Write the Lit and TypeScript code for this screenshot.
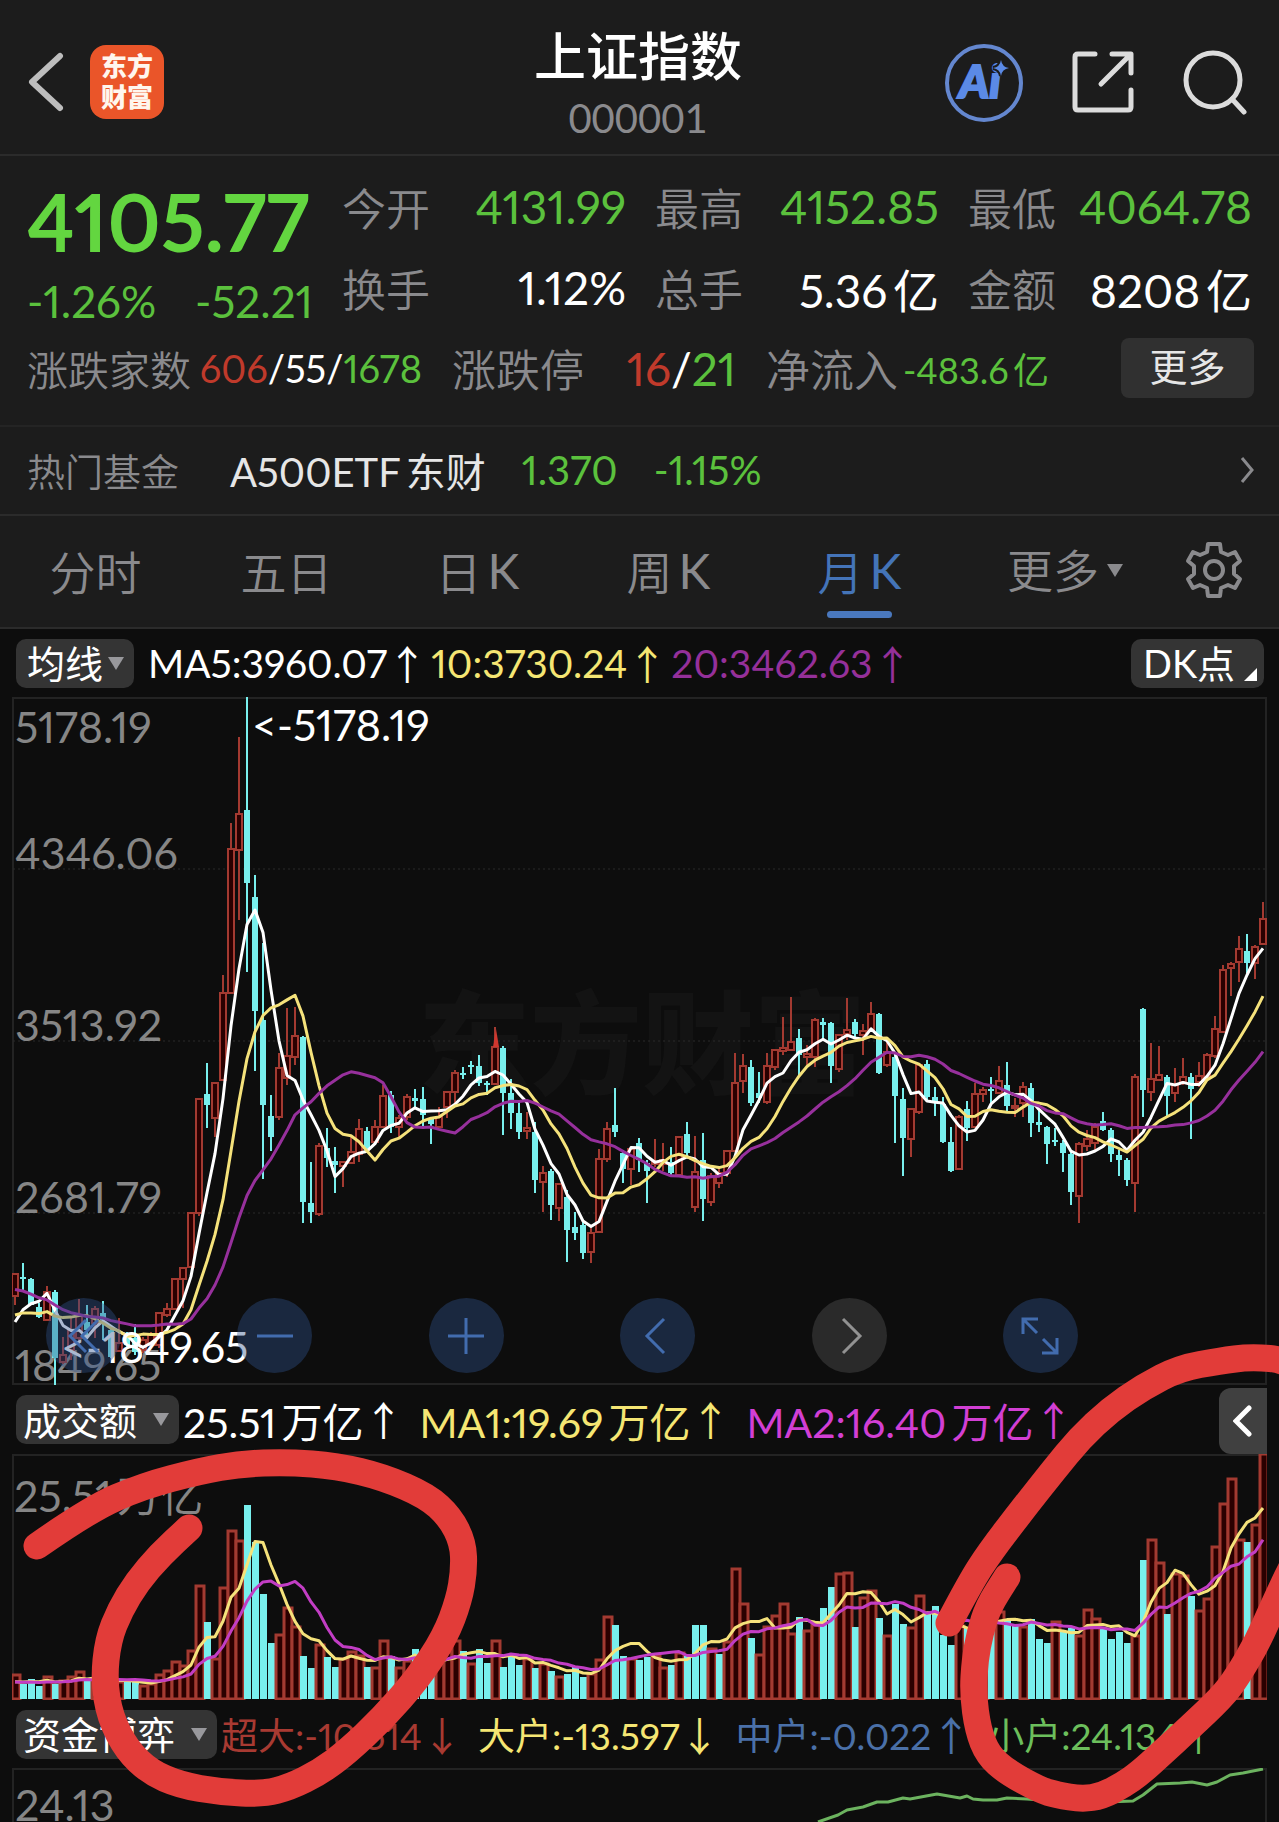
import { LitElement, html, svg, css } from "lit";
import { customElement, property } from "lit/decorators.js";
import { classMap } from "lit/directives/class-map.js";

/* Monthly candles as [direction, high, body top, body bottom, low], in plot units. */
type Candle = [number, number, number, number, number];
const U = 1;
const D = 0;
const CANDLES: Candle[] = [
  [U,1274,1274,1296,1305],[D,1263,1277,1279,1292],[D,1278,1279,1305,1305],[D,1303,1307,1317,1318],
  [U,1286,1292,1320,1321],[D,1290,1292,1358,1386],[U,1337,1355,1362,1364],[U,1318,1330,1350,1360],
  [U,1299,1315,1338,1345],[D,1305,1322,1330,1338],[U,1306,1309,1323,1338],[D,1301,1313,1320,1340],
  [D,1325,1330,1357,1358],[U,1318,1343,1351,1352],[D,1332,1338,1345,1348],[D,1324,1338,1352,1355],
  [U,1337,1340,1350,1353],[U,1332,1335,1345,1347],[U,1312,1313,1345,1348],[U,1303,1309,1315,1317],
  [U,1278,1279,1309,1310],[U,1267,1268,1279,1308],[U,1212,1213,1267,1267],[U,1098,1099,1213,1216],
  [D,1063,1094,1105,1128],[U,1082,1083,1118,1137],[U,975,993,1080,1081],[U,823,849,993,994],
  [U,737,814,850,920],[D,697,810,883,972],[D,875,897,1011,1071],[D,943,1020,1105,1179],
  [D,1095,1116,1137,1151],[U,1053,1068,1117,1120],[U,1008,1056,1078,1085],[U,1007,1036,1057,1065],
  [D,1036,1037,1202,1223],[D,1162,1203,1212,1223],[U,1143,1146,1214,1216],[D,1128,1148,1158,1167],
  [D,1147,1161,1165,1193],[U,1161,1162,1166,1187],[U,1137,1152,1163,1164],[U,1119,1129,1154,1162],
  [D,1127,1131,1148,1150],[U,1120,1127,1142,1145],[U,1085,1096,1127,1128],[D,1091,1095,1127,1133],
  [U,1115,1118,1127,1138],[U,1094,1097,1117,1120],[D,1089,1098,1101,1107],[D,1087,1099,1115,1127],
  [D,1117,1119,1124,1144],[U,1107,1117,1127,1128],[U,1091,1092,1107,1118],[U,1070,1073,1092,1103],
  [D,1067,1073,1075,1079],[D,1061,1065,1067,1074],[D,1055,1066,1083,1086],[D,1081,1083,1085,1095],
  [U,1027,1047,1084,1085],[D,1046,1048,1093,1135],[D,1079,1093,1113,1129],[D,1100,1113,1132,1139],
  [U,1112,1128,1131,1139],[D,1122,1132,1180,1193],[U,1166,1173,1182,1212],[D,1169,1171,1205,1220],
  [U,1183,1184,1208,1221],[D,1190,1197,1230,1262],[D,1212,1227,1233,1240],[D,1220,1225,1253,1259],
  [U,1228,1233,1252,1263],[U,1149,1159,1232,1232],[U,1122,1129,1159,1162],[D,1088,1125,1132,1137],
  [D,1150,1153,1169,1183],[U,1147,1149,1169,1185],[D,1138,1143,1160,1172],[D,1160,1163,1171,1203],
  [U,1139,1162,1164,1167],[U,1143,1160,1164,1171],[D,1147,1162,1173,1176],[U,1137,1137,1175,1177],
  [D,1122,1134,1153,1158],[U,1136,1172,1207,1212],[D,1133,1160,1199,1221],[U,1173,1176,1202,1206],
  [U,1167,1173,1183,1188],[U,1150,1151,1173,1177],[U,1053,1083,1151,1152],[U,1054,1066,1081,1093],
  [D,1060,1067,1103,1106],[D,1072,1093,1098,1103],[U,1053,1066,1102,1104],[U,1049,1050,1067,1070],
  [U,1017,1048,1051,1055],[U,997,1042,1050,1051],[D,1029,1038,1055,1075],[U,1045,1054,1057,1065],
  [U,1018,1020,1057,1067],[D,1018,1022,1025,1040],[D,1022,1023,1066,1083],[U,1034,1035,1069,1072],
  [U,998,1030,1034,1040],[D,1019,1022,1034,1037],[U,1024,1031,1035,1055],[U,1002,1014,1031,1032],
  [D,1013,1014,1073,1074],[U,1040,1052,1065,1067],[D,1053,1057,1096,1143],[D,1088,1099,1138,1176],
  [U,1108,1109,1139,1157],[U,1063,1065,1112,1114],[D,1060,1064,1097,1102],[D,1087,1097,1102,1116],
  [D,1097,1104,1142,1143],[D,1127,1142,1171,1172],[U,1115,1117,1169,1170],[D,1101,1109,1128,1141],
  [U,1083,1094,1127,1128],[U,1087,1090,1094,1102],[D,1077,1089,1091,1103],[U,1066,1081,1093,1093],
  [D,1062,1085,1106,1111],[U,1098,1106,1108,1117],[U,1082,1087,1103,1117],[D,1083,1088,1123,1137],
  [D,1110,1122,1125,1132],[D,1126,1127,1144,1164],[D,1128,1140,1142,1146],[D,1140,1143,1153,1172],
  [D,1152,1154,1192,1205],[U,1142,1144,1196,1223],[U,1130,1139,1146,1151],[U,1123,1127,1143,1150],
  [D,1112,1121,1130,1131],[D,1128,1130,1154,1162],[D,1150,1155,1160,1176],[D,1158,1160,1180,1186],
  [U,1074,1077,1183,1212],[D,1008,1009,1090,1117],[U,1043,1079,1092,1101],[U,1046,1075,1080,1081],
  [D,1075,1077,1096,1116],[U,1068,1085,1093,1102],[U,1058,1077,1082,1085],[D,1073,1077,1089,1139],
  [U,1062,1076,1082,1087],[U,1053,1055,1077,1077],[U,1016,1029,1056,1058],[U,965,970,1032,1033],
  [U,962,964,968,996],[U,936,949,962,982],[D,934,951,963,973],[U,945,947,963,979],[U,902,919,944,944],
];

/* Closes of the months before the first visible candle, needed by the averages. */
const EARLIER_CLOSES = [
  1250,1240,1245,1250,1255,1262,1270,1278,1290,1300,1300,1305,1310,1312,1313,1340,1335,1330,1331,
];

/* Turnover bars; a negative value is a falling month. */
const TURNOVER = [
  24,-15,-20,-13,22,-15,18,22,27,-18,20,-18,-19,17,-18,-17,13,15,24,28,37,33,48,113,-77,40,111,168,158,
  -194,-157,-105,-56,64,91,72,-43,-31,54,-42,-32,40,47,43,-32,31,58,-43,31,38,-50,-30,-27,43,47,58,-48,
  35,-50,-36,58,-32,-43,-34,40,-31,35,-28,22,-25,-33,-22,25,39,82,-74,-43,40,-39,-42,43,31,-34,46,-43,
  -74,-74,50,-45,57,130,95,-61,44,72,83,95,65,-82,68,74,-91,-112,125,126,-72,101,108,-81,63,-95,-75,71,
  103,-87,-93,-64,-54,73,-72,73,80,-77,87,-80,-75,72,-80,-60,-56,77,-67,-71,63,89,80,-70,-60,-67,-56,63,
  -139,159,136,-85,125,123,-103,88,100,152,195,220,159,-157,174,245,
];

const MONEY_FLOW = [
  [818,1822],[838,1815],[847,1810],[863,1807],[877,1802],[888,1802],[903,1798],[910,1799],[937,1794],
  [960,1798],[967,1796],[973,1799],[983,1800],[997,1800],[1007,1798],[1027,1799],[1080,1803],[1133,1801],
  [1143,1795],[1157,1784],[1180,1783],[1192,1782],[1207,1785],[1217,1782],[1230,1775],[1243,1773],[1263,1769],
];

const SCRIBBLES = [
  [[37,1546],[90,1509],[143,1486],[200,1471],[240,1464],[287,1462],[337,1466],[383,1477],[427,1496],
   [450,1517],[463,1543],[464,1570],[459,1600],[445,1637],[418,1678],[383,1718],[347,1752],[320,1772],
   [290,1787],[263,1794],[220,1792],[180,1785],[150,1772],[127,1750],[110,1717],[104,1680],[108,1640],
   [120,1610],[137,1582],[160,1555],[189,1528]],
  [[949,1623],[970,1583],[990,1552],[1023,1509],[1053,1471],[1080,1438],[1110,1410],[1143,1387],
   [1180,1368],[1220,1361],[1250,1357],[1290,1360],[1330,1400],[1330,1500],[1295,1560],[1273,1607],
   [1257,1643],[1237,1677],[1222,1697],[1187,1730],[1162,1753],[1140,1773],[1123,1785],[1102,1796],
   [1082,1799],[1057,1795],[1040,1790],[1007,1772],[988,1755],[978,1730],[973,1693],[975,1660],
   [980,1633],[988,1607],[1007,1577]],
];

const STEP = 8;
const FIRST_X = 15;
const xAt = (i: number) => FIRST_X + i * STEP;

function movingAverage(values: number[], count: number, period: number): number[] {
  const offset = values.length - count;
  return Array.from({ length: count }, (_, i) => {
    const end = offset + i + 1;
    const part = values.slice(Math.max(0, end - period), end);
    return part.reduce((a, b) => a + b, 0) / part.length;
  });
}

const points = (ys: number[]) => ys.map((y, i) => `${xAt(i)},${y.toFixed(1)}`).join(" ");

function smoothPath(p: number[][]): string {
  let d = `M${p[0][0]} ${p[0][1]}`;
  for (let i = 1; i < p.length - 1; i++) {
    const mx = (p[i][0] + p[i + 1][0]) / 2;
    const my = (p[i][1] + p[i + 1][1]) / 2;
    d += `Q${p[i][0]} ${p[i][1]} ${mx} ${my}`;
  }
  const last = p[p.length - 1];
  return d + `L${last[0]} ${last[1]}`;
}

const base = css`
  * { box-sizing: border-box; }
  button, select, a { font: inherit; color: inherit; margin: 0; padding: 0; border: 0; background: none; text-decoration: none; }
  button, select { appearance: none; cursor: pointer; }
  svg { display: block; }
`;

@customElement("quote-header")
class QuoteHeader extends LitElement {
  static styles = [base, css`
    :host { display: block; background: #1c1c1c; border-bottom: 2px solid #2b2b2b; }
    .bar { display: grid; grid-template-columns: 1fr auto 1fr; align-items: center; height: 154px; padding: 10px 31px 0 28px; }
    .side { display: flex; align-items: center; gap: 26px; }
    .end { justify-content: flex-end; gap: 49px; }
    .logo { display: grid; place-content: center; width: 74px; height: 74px; border-radius: 16px; background: #ea5529; color: #fff6ee; font-size: 26px; line-height: 31px; font-weight: 900; text-align: center; }
    .title { text-align: center; padding-top: 12px; }
    h1 { margin: 0; font-size: 52px; line-height: 60px; font-weight: 500; color: #fff; }
    p { margin: 0; font-size: 40px; line-height: 64px; color: #8a8a8d; font-variant-numeric: tabular-nums; }
    .ai { font-weight: 900; font-style: italic; font-size: 46px; fill: #5b8ae6; stroke: #5b8ae6; stroke-width: 2; }
  `];
  render() {
    return html`<header class="bar">
      <div class="side">
        <button aria-label="返回"><svg width="36" height="60" viewBox="0 0 36 60" fill="none" stroke="#bdbdbd" stroke-width="6" stroke-linecap="round" stroke-linejoin="round"><path d="M32 4 4 30 32 56"/></svg></button>
        <a class="logo" href="#home">东方<br>财富</a>
      </div>
      <div class="title"><h1>上证指数</h1><p>000001</p></div>
      <div class="side end">
        <button aria-label="智能助手"><svg width="79" height="79" viewBox="0 0 79 79">
          <circle cx="40" cy="40" r="37" fill="none" stroke="#6487cf" stroke-width="4"/>
          <text class="ai" x="15" y="55">Ai</text>
          <path d="M57 17Q58 24 65 25 58 26 57 33 56 26 49 25 56 24 57 17Z" fill="#5b8ae6" stroke="#1c1c1c" stroke-width="4" paint-order="stroke"/>
        </svg></button>
        <button aria-label="分享"><svg width="62" height="62" viewBox="0 0 62 62" fill="none" stroke="#dcdcdc" stroke-width="5" stroke-linecap="round" stroke-linejoin="round"><path d="M23 3H6Q3 3 3 6V56Q3 59 6 59H56Q59 59 59 56V39M40 3H59V22M58 4 29 33"/></svg></button>
        <button aria-label="搜索"><svg width="65" height="65" viewBox="0 0 65 65" fill="none" stroke="#dcdcdc" stroke-width="5" stroke-linecap="round"><circle cx="30" cy="30" r="27"/><path d="M49 49 61 62"/></svg></button>
      </div>
    </header>`;
  }
}

@customElement("quote-summary")
class QuoteSummary extends LitElement {
  static styles = [base, css`
    :host { display: block; background: #1c1c1c; color: #fff; }
    .quote { display: grid; grid-template-columns: 286px repeat(3, 1fr); column-gap: 29px; grid-template-rows: 81px 81px; padding: 10px 27px 0; }
    .price { grid-row: 1 / 3; color: #63d640; padding-top: 5px; }
    .last { font-size: 80px; line-height: 100px; font-weight: 700; }
    .change { display: flex; justify-content: space-between; font-size: 44px; line-height: 60px; color: #5bc13d; }
    .cell { display: flex; justify-content: space-between; align-items: center; font-size: 46px; white-space: nowrap; }
    .label { color: #8a8a8d; font-size: 44px; font-weight: 350; }
    .up { color: #c03a2b; }
    .down { color: #5bc13d; }
    .more-row { display: grid; grid-template-columns: 395px 284px 283px 1fr; column-gap: 30px; align-items: center; height: 80px; padding: 0 25px 0 27px; margin-bottom: 17px; }
    .small { font-size: 38px; }
    .small .label { font-size: 41px; }
    .flow { font-size: 36px; }
    .more { justify-self: end; width: 133px; height: 60px; border-radius: 8px; background: #303030; color: #e6e6e6; font-size: 38px; line-height: 56px; padding-bottom: 4px; }
    .fund { display: flex; align-items: center; height: 91px; padding: 0 25px 2px 27px; border-top: 2px solid #242424; border-bottom: 2px solid #2b2b2b; font-size: 40px; color: #e6e6e6; }
    .fund .label { font-size: 38px; margin-right: 51px; }
    .fund .down { margin-left: 36px; }
    .fund svg { margin-left: auto; }
  `];
  private cells: [string, string, boolean][] = [
    ["今开", "4131.99", true], ["最高", "4152.85", true], ["最低", "4064.78", true],
    ["换手", "1.12%", false], ["总手", "5.36亿", false], ["金额", "8208亿", false],
  ];
  render() {
    return html`
      <section class="quote">
        <div class="price">
          <div class="last">4105.77</div>
          <div class="change"><span>-1.26%</span><span>-52.21</span></div>
        </div>
        ${this.cells.map(([label, value, down]) => html`<div class="cell"><span class="label">${label}</span><span class=${classMap({ down })}>${value}</span></div>`)}
      </section>
      <section class="more-row">
        <div class="cell small"><span class="label">涨跌家数</span><span><span class="up">606</span>/55/<span class="down">1678</span></span></div>
        <div class="cell"><span class="label">涨跌停</span><span><span class="up">16</span>/<span class="down">21</span></span></div>
        <div class="cell flow"><span class="label">净流入</span><span class="down">-483.6亿</span></div>
        <button class="more">更多</button>
      </section>
      <a class="fund" href="#fund">
        <span class="label">热门基金</span><span>A500ETF东财</span><span class="down">1.370</span><span class="down">-1.15%</span>
        <svg width="14" height="28" viewBox="0 0 14 28" fill="none" stroke="#8a8a8d" stroke-width="3"><path d="M2 2 12 14 2 26"/></svg>
      </a>`;
  }
}

@customElement("period-tabs")
class PeriodTabs extends LitElement {
  static styles = [base, css`
    :host { display: block; background: #1c1c1c; border-bottom: 2px solid #2b2b2b; color: #8a8a8d; }
    nav { display: grid; grid-template-columns: repeat(5, 191fr) 220fr 78fr; height: 111px; padding-right: 26px; align-items: stretch; }
    button, label { display: flex; align-items: center; justify-content: center; font-size: 46px; font-weight: 350; position: relative; white-space: nowrap; padding-bottom: 3px; }
    label { gap: 8px; }
    .active { color: #4474b8; }
    .active::after { content: ""; position: absolute; bottom: 9px; width: 65px; height: 7px; border-radius: 4px; background: #4a78bd; }
    .latin { font-weight: 400; font-size: 48px; margin-left: 6px; }
  `];
  @property() active = "月K";
  render() {
    return html`<nav>
      ${["分时", "五日", "日K", "周K", "月K"].map((t) => html`<button class=${classMap({ active: t === this.active })}>${t.replace("K", "")}${t.endsWith("K") ? html`<span class="latin">K</span>` : ""}</button>`)}
      <label><select aria-label="更多周期"><option>更多</option></select><svg width="16" height="13" viewBox="0 0 16 13" fill="#8a8a8d"><path d="M0 0H16L8 13Z"/></svg></label>
      <button aria-label="设置"><svg width="58" height="58" viewBox="-29 -29 58 58" fill="none" stroke="#8a8a8d" stroke-width="4" stroke-linejoin="round"><path d="M-6-26H6L7-18 14-15 21-18 26-9 20-4V4L26 9 21 18 14 15 7 18 6 26H-6L-7 18-14 15-21 18-26 9-20 4V-4L-26-9-21-18-14-15-7-18Z"/><circle r="9"/></svg></button>
    </nav>`;
  }
}

@customElement("chart-panel")
class ChartPanel extends LitElement {
  static styles = [base, css`
    :host { display: block; position: relative; overflow: hidden; background: #0d0d0d; color: #fff; }
    .legend { display: flex; align-items: center; height: 68px; padding: 0 15px 0 16px; font-size: 39px; white-space: nowrap; }
    .volume { height: 69px; gap: 4px; font-size: 41px; }
    .flow { font-size: 37px; gap: 4px; }
    .chip { display: flex; align-items: center; gap: 4px; height: 49px; padding: 0 10px 0 11px; border-radius: 10px; background: #343434; font-size: 38px; color: #fff; }
    .wide { gap: 15px; padding: 0 10px 0 7px; }
    .corner { margin-left: auto; gap: 8px; padding: 0 7px 0 12px; }
    .corner svg { align-self: flex-end; margin-bottom: 7px; }
    .value { display: flex; align-items: center; }
    .averages { display: flex; margin-left: 14px; gap: 4px; }
    .turnover, .orders { display: flex; gap: 16px; }
    .arrow { font-family: "Noto Sans CJK SC", sans-serif; font-size: 40px; line-height: 49px; }
    .white { color: #fff; }
    .yellow { color: #f5e673; }
    .purple { color: #95309a; }
    .magenta { color: #d23fd4; }
    .red { color: #a83a32; }
    .blue { color: #4a70a8; }
    .green { color: #6cbf5c; }
    .plot { position: relative; margin: 0 12px; }
    .plot > svg { width: 100%; height: auto; }
    .tools { position: absolute; left: 0; right: 0; bottom: 12px; display: flex; justify-content: space-between; padding: 0 189px 0 34px; }
    .tools button { display: grid; place-items: center; width: 75px; height: 75px; border-radius: 50%; background: rgba(48, 83, 140, 0.4); color: #426cae; }
    .tools .off { background: #2a2a2a; color: #929292; }
    .tools svg { fill: none; stroke: currentColor; stroke-width: 3; }
    .handle { position: absolute; right: 0; bottom: 100%; display: grid; place-items: center; width: 48px; height: 66px; border-radius: 12px 0 0 12px; background: #404040; }
    .scribble { position: absolute; inset: 0; width: 100%; height: auto; fill: none; stroke: #e23c39; stroke-width: 27; stroke-linecap: round; stroke-linejoin: round; pointer-events: none; }
    .frame { fill: none; stroke: #232323; stroke-width: 2; }
    .grid { stroke: #2a2a2a; stroke-width: 1; stroke-dasharray: 2 3; }
    .axis { fill: #868686; font-size: 43px; }
    .note { fill: #fff; font-size: 43px; }
    .mark { fill: #131313; font-size: 112px; font-weight: 900; }
    .cu { fill: #2a0000; stroke: #a33a31; stroke-width: 2; }
    .bar { stroke-width: 3; }
    .cd { fill: #78efed; stroke: none; }
    .line { fill: none; stroke-width: 3; stroke-linejoin: round; }
    .l1 { stroke: #fff; }
    .l2 { stroke: #f5e27b; }
    .l3 { stroke: #97309c; }
    .l4 { stroke: #c23dc4; }
    .l5 { stroke: #6cb35f; }
  `];

  private value(cls: string, text: string, arrow: string) {
    return html`<span class="value ${cls}">${text}<span class="arrow">${arrow}</span></span>`;
  }

  private chip(text: string, label: string, wide = false) {
    return html`<label class=${classMap({ chip: true, wide })}><select aria-label=${label}><option>${text}</option></select><svg width="16" height="13" viewBox="0 0 16 13" fill="#98989c"><path d="M0 0H16L8 13Z"/></svg></label>`;
  }

  private candle([up, high, top, bottom, low]: Candle, i: number) {
    const x = xAt(i);
    if (up) {
      return svg`<g class="cu"><path d="M${x} ${high}V${top}M${x} ${bottom}V${low}"/><rect x=${x - 3} y=${top} width="6" height=${Math.max(1, bottom - top)}/></g>`;
    }
    return svg`<g class="cd"><rect x=${x - 1} y=${high} width="2" height=${low - high}/><rect x=${x - 3} y=${top} width="6" height=${Math.max(2, bottom - top)}/></g>`;
  }

  private bar(v: number, i: number) {
    const x = xAt(i);
    return v > 0
      ? svg`<rect class="cu bar" x=${x - 3} y=${1699 - v} width="8" height=${v}/>`
      : svg`<rect class="cd" x=${x - 3} y=${1699 + v} width="7" height=${-v}/>`;
  }

  render() {
    const n = CANDLES.length;
    const closes = [...EARLIER_CLOSES, ...CANDLES.map((c) => (c[0] ? c[2] : c[3]))];
    const tops = [19, 18, 17, 16, 15, 16, 17, 15, 14, ...TURNOVER.map(Math.abs)].map((v) => 1699 - v);
    return html`
      <div class="legend">
        ${this.chip("均线", "主图指标")}
        <div class="averages">
          ${this.value("white", "MA5:3960.07", "↑")}${this.value("yellow", "10:3730.24", "↑")}${this.value("purple", "20:3462.63", "↑")}
        </div>
        <label class="chip corner"><select aria-label="买卖点"><option>DK点</option></select><svg width="13" height="13" viewBox="0 0 13 13" fill="#fff"><path d="M13 0V13H0Z"/></svg></label>
      </div>

      <div class="plot">
        <svg viewBox="12 697 1255 688" role="img" aria-label="月K线">
          <rect class="frame" x="13" y="698" width="1253" height="686"/>
          <text class="mark" x="418" y="1086">东方财富</text>
          ${[869, 1041, 1213].map((y) => svg`<path class="grid" d="M13 ${y}H1266"/>`)}
          ${[["5178.19", 743], ["4346.06", 869], ["3513.92", 1041], ["2681.79", 1213], ["1849.65", 1381]].map(([t, y]) => svg`<text class="axis" x="15" y=${y}>${t}</text>`)}
          ${CANDLES.map((c, i) => this.candle(c, i))}
          <path d="M493 1047 496 1029 499 1047Z" fill="#d0372f"/>
          <polyline class="line l1" points=${points(movingAverage(closes, n, 5))}/>
          <polyline class="line l2" points=${points(movingAverage(closes, n, 10))}/>
          <polyline class="line l3" points=${points(movingAverage(closes, n, 20))}/>
          <text class="note" x="252" y="741">&lt;-5178.19</text>
          <text class="note" x="61" y="1363">&lt;-1849.65</text>
        </svg>
        <div class="tools">
          <button aria-label="最早"><svg width="40" height="40"><path d="M22 4 6 20 22 36M34 4 18 20 34 36"/></svg></button>
          <button aria-label="缩小"><svg width="40" height="40"><path d="M2 20H38"/></svg></button>
          <button aria-label="放大"><svg width="40" height="40"><path d="M2 20H38M20 2V38"/></svg></button>
          <button aria-label="向左"><svg width="40" height="40"><path d="M26 3 9 20 26 37"/></svg></button>
          <button class="off" aria-label="向右"><svg width="40" height="40"><path d="M14 3 31 20 14 37"/></svg></button>
          <button aria-label="全屏"><svg width="40" height="40"><path d="M3 18V3H18M4 4 17 17M37 22V37H22M36 36 23 23"/></svg></button>
        </div>
      </div>

      <div class="legend volume">
        ${this.chip("成交额", "副图指标一", true)}
        <div class="turnover">
          ${this.value("white", "25.51万亿", "↑")}${this.value("yellow", "MA1:19.69万亿", "↑")}${this.value("magenta", "MA2:16.40万亿", "↑")}
        </div>
      </div>
      <div class="plot">
        <svg viewBox="12 1454 1255 246" role="img" aria-label="成交额">
          <path class="frame" d="M13 1700V1455H1266V1700"/>
          <text class="axis" x="14" y="1512">25.51万亿</text>
          ${TURNOVER.map((v, i) => this.bar(v, i))}
          <polyline class="line l2" points=${points(movingAverage(tops, n, 5))}/>
          <polyline class="line l4" points=${points(movingAverage(tops, n, 10))}/>
        </svg>
        <button class="handle" aria-label="展开侧栏"><svg width="20" height="32" viewBox="0 0 20 32" fill="none" stroke="#fff" stroke-width="5" stroke-linecap="round"><path d="M16 3 3 16 16 29"/></svg></button>
      </div>

      <div class="legend flow">
        ${this.chip("资金博弈", "副图指标二", true)}
        <div class="orders">
          ${this.value("red", "超大:-10.514", "↓")}${this.value("yellow", "大户:-13.597", "↓")}${this.value("blue", "中户:-0.022", "↑")}${this.value("green", "小户:24.134", "↑")}
        </div>
      </div>
      <div class="plot">
        <svg viewBox="12 1768 1255 54" role="img" aria-label="资金博弈">
          <path class="frame" d="M13 1822V1769H1266V1822"/>
          <text class="axis" x="15" y="1821">24.13</text>
          <polyline class="line l5" points=${MONEY_FLOW.map((p) => p.join()).join(" ")}/>
        </svg>
      </div>
      <svg class="scribble" viewBox="0 629 1279 1193" aria-hidden="true">${SCRIBBLES.map((s) => svg`<path d=${smoothPath(s)}/>`)}</svg>`;
  }
}

@customElement("app-root")
class AppRoot extends LitElement {
  static styles = css`
    :host {
      display: block;
      min-height: 100vh;
      background: #0d0d0d;
      font-family: Lato, "Noto Sans CJK SC", sans-serif;
      font-variant-numeric: proportional-nums;
      text-autospace: normal;
    }
  `;
  render() {
    return html`<quote-header></quote-header><quote-summary></quote-summary><period-tabs></period-tabs><chart-panel></chart-panel>`;
  }
}
